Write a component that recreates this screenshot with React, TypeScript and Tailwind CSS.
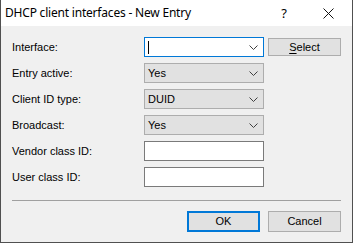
import React from "react";

const Chevron = () => (
  <svg width="9" height="5" viewBox="0 0 9 5" className="shrink-0">
    <path d="M0.5 0.5 L4.5 4.5 L8.5 0.5" fill="none" stroke="#404040" strokeWidth="1" />
  </svg>
);

function Combo({ value, focused }: { value?: string; focused?: boolean }) {
  return (
    <div
      className={
        "w-[120px] h-[20px] flex items-center justify-between pl-[3px] pr-[5px] border " +
        (focused ? "border-[#0078d7] bg-white" : "border-[#adadad] bg-[#e1e1e1]")
      }
    >
      {focused ? (
        <div className="w-px h-[13px] bg-black ml-[0px]" />
      ) : (
        <span className="text-[11px] leading-none text-black">{value}</span>
      )}
      <Chevron />
    </div>
  );
}

function TextBox() {
  return <div className="w-[120px] h-[20px] border border-[#7a7a7a] bg-white" />;
}

function Row({ label, children }: { label: string; children: React.ReactNode }) {
  return (
    <div className="flex items-center h-[20px]">
      <div className="w-[132px] text-[11px] leading-none text-black">{label}</div>
      {children}
    </div>
  );
}

export default function App() {
  return (
    <div
      className="w-[353px] h-[243px] flex flex-col border-x border-b border-[#505050] bg-[#f0f0f0]"
      style={{ fontFamily: '"Liberation Sans", Arial, sans-serif' }}
    >
      <div
        className="h-[26px] bg-white flex items-center shrink-0"
        style={{ fontFamily: '"Noto Sans", "Open Sans", sans-serif' }}
      >
        <span className="pl-[4px] text-[12px] leading-none text-black tracking-[-0.2px]">
          DHCP client interfaces - New Entry
        </span>
        <span className="ml-auto mr-[36px] text-[13px] leading-none text-black">?</span>
        <svg width="11" height="11" viewBox="0 0 11 11" className="mr-[18px]">
          <path d="M0.5 0.5 L10.5 10.5 M10.5 0.5 L0.5 10.5" stroke="#111" strokeWidth="1" />
        </svg>
      </div>
      <div className="flex-1 flex flex-col pl-[11px] pr-[11px] pt-[11px]">
        <div className="flex flex-col gap-[6px]">
          <Row label="Interface:">
            <Combo focused />
            <button className="ml-[4px] w-[73px] h-[18px] border border-[#adadad] bg-[#e1e1e1] text-[11px] leading-none text-black">
              <span className="underline underline-offset-[2px]">S</span>elect
            </button>
          </Row>
          <Row label="Entry active:">
            <Combo value="Yes" />
          </Row>
          <Row label="Client ID type:">
            <Combo value="DUID" />
          </Row>
          <Row label="Broadcast:">
            <Combo value="Yes" />
          </Row>
          <Row label="Vendor class ID:">
            <TextBox />
          </Row>
          <Row label="User class ID:">
            <TextBox />
          </Row>
        </div>
        <div className="mt-[13px] h-px bg-[#a0a0a0]" />
        <div className="mt-[10px] flex justify-end gap-[8px]">
          <button className="w-[73px] h-[21px] border-2 border-[#0078d7] bg-[#e1e1e1] text-[11px] leading-none text-black">
            OK
          </button>
          <button className="w-[73px] h-[21px] border border-[#adadad] bg-[#e1e1e1] text-[11px] leading-none text-black">
            Cancel
          </button>
        </div>
      </div>
    </div>
  );
}
